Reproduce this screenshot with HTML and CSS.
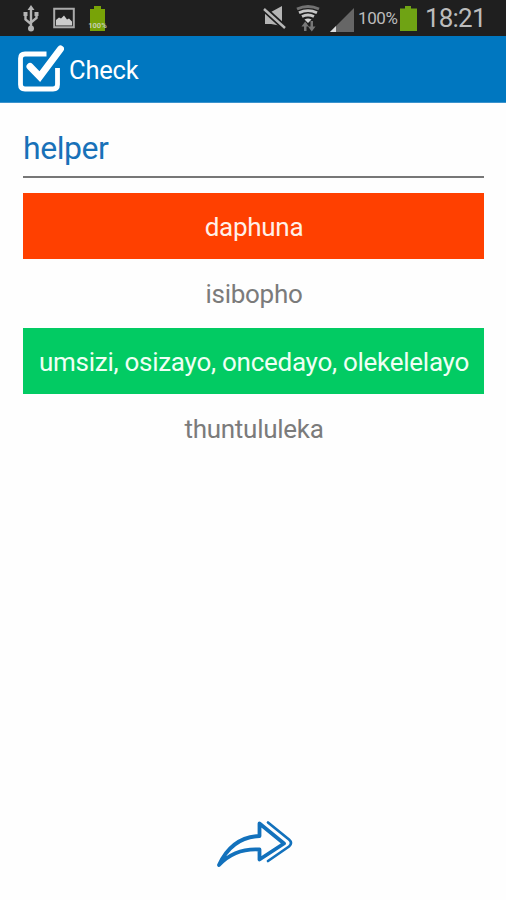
FILE: index.html
```html
<!DOCTYPE html>
<html lang="en">
<head>
<meta charset="utf-8">
<title>Check</title>
<link rel="stylesheet" href="styles.css">
</head>
<body>
<div class="screen">
  <div class="status">
    <div class="group">
      <svg width="16" height="28" viewBox="0 0 16 28" fill="none" stroke="#b4b4b4" stroke-width="2.400"><path d="M8 5v19M2.500 10v5.500l5.500 4.500M13.500 10v4l-5.500 4.500"/><path d="M8 1l3.500 5h-7zM0.500 8h4v4h-4zM11.500 8h4v4h-4z" fill="#b4b4b4" stroke="none"/><circle cx="8" cy="24.500" r="3" fill="#b4b4b4" stroke="none"/></svg>
      <svg class="photo" width="24" height="24" viewBox="0 0 24 24"><path d="M2.200 2.700h19.600v18.500H2.200z" fill="none" stroke="#aaa" stroke-width="2"/><path d="M4 19.500V14l3-2.500 2 1 3-3 3 4 2-1 3 3v4z" fill="#ccc"/></svg>
      <svg class="charge" width="20" height="28" viewBox="0 0 20 28"><path d="M2 5h4V2h7v3h4v22H2z" fill="#78a307"/><text x="9.500" y="23.500" class="tiny" text-anchor="middle">100%</text></svg>
    </div>
    <div class="group">
      <svg width="24" height="26" viewBox="0 0 24 26"><path d="M2 7h6l11-6v20L8 19H2z" fill="#b5b5b5"/><path d="M0 3l22 20" stroke="#1f1f1f" stroke-width="6"/><path d="M1 4l21 19" stroke="#b8b8b8" stroke-width="2.400"/></svg>
      <svg class="wifi" width="24" height="28" viewBox="0 0 24 28" fill="none"><path d="M1 5q11-5 22 0" stroke="#727272" stroke-width="3"/><path d="M3 8.800q9-4.500 18 0M6 12.500q6-3 12 0" stroke="#c6c6c6" stroke-width="2.800"/><path d="M8.500 15.500q3.500-2 7 0l-3.500 3.500z" fill="#d5d5d5"/><path d="M8 19h2.500v8H8zM14.500 17H17v8h-2.500z" fill="#777"/><path d="M5.500 22.500l3.700-5 3.700 5zM12 22.500h7.500l-3.700 5z" fill="#777"/></svg>
      <svg class="signal" width="25" height="24" viewBox="0 0 25 24"><path d="M0 24L24 0v24z" fill="#666"/><path d="M0 24l6-6v6z" fill="#ddd"/></svg>
      <span class="percent">100%</span>
      <svg class="battery" width="19" height="28" viewBox="0 0 19 28"><path d="M1 4.500h5V2h6v2.500h6V27H1z" fill="#6fa314"/></svg>
      <span class="clock">18:21</span>
    </div>
  </div>
  <header class="bar">
    <svg width="48" height="50" viewBox="16 45 48 50" fill="none" stroke="#fff"><path d="M46.500 55H25q-4.500 0-4.500 4.500v26q0 4.500 4.500 4.500h28q4.500 0 4.500-4.500V69" stroke-width="4.800"/><path d="M30 67.500l9.800 10.200 20.700-27.700" stroke-width="7" stroke-linecap="round"/></svg>
    <h1 class="title">Check</h1>
  </header>
  <main class="quiz">
    <div class="word"><span>helper</span></div>
    <ul class="answers">
      <li class="answer wrong">daphuna</li>
      <li class="answer">isibopho</li>
      <li class="answer right">umsizi, osizayo, oncedayo, olekelelayo</li>
      <li class="answer">thuntululeka</li>
    </ul>
  </main>
  <footer class="next">
    <svg width="80" height="50" viewBox="215 819 80 50" fill="none" stroke="#1271bc" stroke-linejoin="round" stroke-linecap="round"><path d="M219 865Q232 837 259.500 836V823.500L284 843.500 259.500 859.500V849.500Q235 848 219 865z" stroke-width="3.800"/><path d="M268 822.500L289 839.500Q293 843 289 846.500L268 861" stroke-width="2.700"/></svg>
  </footer>
</div>
</body>
</html>
```
FILE: styles.css
```css
* { box-sizing: border-box; }
body { margin: 0; background: #fefefe; font-family: Roboto, "Liberation Sans", sans-serif; }
.screen { height: 900px; display: flex; flex-direction: column; }
svg { display: block; flex: none; }
.status { height: 36px; padding: 0 21px 0 23px; background: #1f1f1f; display: flex; justify-content: space-between; align-items: center; color: #bcbcbc; }
.group { display: flex; align-items: center; white-space: nowrap; }
.photo { margin-left: 13px; }
.charge { margin-left: 12px; }
.tiny { font-size: 7.5px; font-weight: 700; fill: #c5d0b0; }
.wifi { margin-left: 9px; }
.signal { margin: 3px 0 0 10px; }
.percent { width: 40px; margin: 0 0 0 3px; font-size: 17px; letter-spacing: -0.4px; }
.battery { margin-left: 1px; }
.clock { width: 60px; margin-left: 7px; font-size: 26px; letter-spacing: -0.8px; }
.bar { height: 66.500px; padding: 0 16px; background: #0077c0; border-bottom: 1px solid #3b93cd; display: flex; align-items: center; }
.title { margin: 3px 0 0 5px; font-size: 25.5px; font-weight: 400; letter-spacing: -0.2px; color: #fff; }
.quiz { padding: 13px 22px 0 23px; }
.word { height: 62px; padding-top: 13px; border-bottom: 2px solid #777; font-size: 32px; line-height: 38px; letter-spacing: -0.45px; color: #1871b8; }
.answers { margin: 15px 0 0; padding: 0; list-style: none; }
.answer { height: 67.500px; padding: 2px 0 0 1px; display: flex; align-items: center; justify-content: center; font-size: 26px; letter-spacing: -0.27px; color: #7b7b7b; white-space: nowrap; border-bottom: 1px solid transparent; background-clip: padding-box; }
.wrong { background-color: #ff4000; color: #fff0e8; }
.right { background-color: #02cb63; color: #effff4; }
.next { margin-top: auto; height: 81px; display: flex; justify-content: center; padding-left: 4px; }
```
